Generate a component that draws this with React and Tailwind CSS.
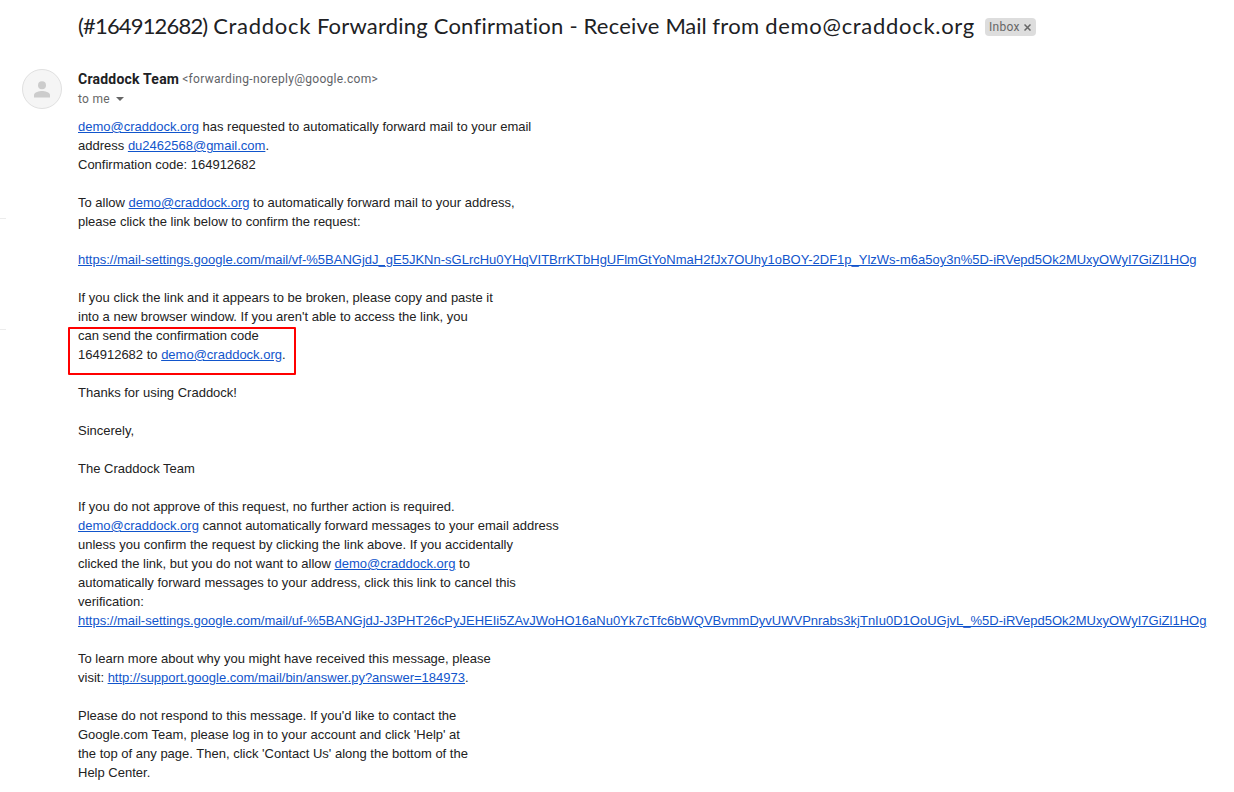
const Link = ({ children }) => (
  <a href="#" className="text-[#1155cc] underline">{children}</a>
);

const Demo = () => <Link>demo@craddock.org</Link>;

const Blank = () => <div className="h-[19px]" />;

const DIVIDERS = "absolute left-0 h-px w-1.5 bg-[#ececec]";

export default function App() {
  return (
    <div className="relative h-[792px] w-[1234px] overflow-hidden bg-white font-['Liberation_Sans',Arial,sans-serif] text-[#222222]">
      <div className={`${DIVIDERS} top-[218px]`} />
      <div className={`${DIVIDERS} top-[329px]`} />

      <header className="flex h-[54px] items-center pl-[78px]">
        <h1 className="w-[897px] shrink-0 whitespace-nowrap pb-0.5 font-['Lato',sans-serif] text-[22px] leading-7 tracking-[0.2px] text-[#202124]">
          <span className="tracking-[-0.83px]">(#164912682)</span>{" "}
          <span className="tracking-[0.7px]">Craddock</span>{" "}
          Forwarding{" "}
          <span className="tracking-[0.25px]">Confirmation</span>{" "}
          - Receive{" "}
          <span className="tracking-[-0.1px]">Mail</span>{" "}
          <span className="tracking-[0.3px]">from</span>{" "}
          <span className="tracking-[0.7px]">demo@craddock.org</span>
        </h1>
        <div className="ml-[10px] flex h-[18px] w-[51px] items-center rounded-[4px] bg-[#dddddd] pl-1 font-['Roboto',sans-serif] text-xs leading-[18px] tracking-[0.3px] text-[#666666]">
          <span>Inbox</span>
          <svg className="ml-[4.5px] h-[7px] w-[7px]" viewBox="0 0 7 7" fill="none" stroke="#666666" strokeWidth="1.5">
            <path d="M.5.5l6 6M6.5.5l-6 6" />
          </svg>
        </div>
      </header>

      <section className="flex h-[63px] pl-[22px] pt-[15px]">
        <div className="flex h-10 w-10 items-center justify-center rounded-full border border-[#e0e0e0] bg-[#f5f5f5]">
          <svg className="h-6 w-6" viewBox="0 0 24 24" fill="#cccccc">
            <circle cx="12" cy="8.300" r="4" />
            <path d="M4 20.500v-2.500c0-2.700 5.300-4 8-4s8 1.300 8 4v2.500z" />
          </svg>
        </div>
        <div className="ml-4 font-['Roboto',sans-serif]">
          <div className="flex h-5 items-center whitespace-nowrap">
            <span className="text-sm font-bold leading-5 tracking-[0.22px] text-[#202124]">Craddock Team</span>
            <span className="ml-[3px] text-xs leading-5 tracking-[0.3px] text-[#5f6368]">&lt;forwarding-noreply@google.com&gt;</span>
          </div>
          <div className="flex h-5 items-center text-xs tracking-[0.3px] text-[#666666]">
            <span>to me</span>
            <svg className="ml-1.5 h-1 w-2" viewBox="0 0 8 4" fill="#666666">
              <path d="M0 0h8L4 4z" />
            </svg>
          </div>
        </div>
      </section>

      <main className="whitespace-nowrap pl-[78px] text-[13px] leading-[19px]">
        <p><Demo /> has requested to automatically forward mail to your email</p>
        <p>address <Link>du2462568@gmail.com</Link>.</p>
        <p>Confirmation code: 164912682</p>
        <Blank />
        <p>To allow <Demo /> to automatically forward mail to your address,</p>
        <p>please click the link below to confirm the request:</p>
        <Blank />
        <p><Link>https://mail-settings.google.com/mail/vf-%5BANGjdJ_gE5JKNn-sGLrcHu0YHqVITBrrKTbHgUFlmGtYoNmaH2fJx7OUhy1oBOY-2DF1p_YlzWs-m6a5oy3n%5D-iRVepd5Ok2MUxyOWyI7GiZl1HOg</Link></p>
        <Blank />
        <p>If you click the link and it appears to be broken, please copy and paste it</p>
        <p>into a new browser window. If you aren't able to access the link, you</p>
        <div className="relative">
          <p>can send the confirmation code</p>
          <p>164912682 to <Demo />.</p>
          <div className="pointer-events-none absolute -left-2.5 top-[1px] h-12 w-[228px] rounded-[1px] border-2 border-[#ff0000]" />
        </div>
        <Blank />
        <p>Thanks for using Craddock!</p>
        <Blank />
        <p>Sincerely,</p>
        <Blank />
        <p>The Craddock Team</p>
        <Blank />
        <p>If you do not approve of this request, no further action is required.</p>
        <p><Demo /> cannot automatically forward messages to your email address</p>
        <p>unless you confirm the request by clicking the link above. If you accidentally</p>
        <p>clicked the link, but you do not want to allow <Demo /> to</p>
        <p>automatically forward messages to your address, click this link to cancel this</p>
        <p>verification:</p>
        <p><Link>https://mail-settings.google.com/mail/uf-%5BANGjdJ-J3PHT26cPyJEHEIi5ZAvJWoHO16aNu0Yk7cTfc6bWQVBvmmDyvUWVPnrabs3kjTnIu0D1OoUGjvL_%5D-iRVepd5Ok2MUxyOWyI7GiZl1HOg</Link></p>
        <Blank />
        <p>To learn more about why you might have received this message, please</p>
        <p>visit: <Link>http://support.google.com/mail/bin/answer.py?answer=184973</Link>.</p>
        <Blank />
        <p>Please do not respond to this message. If you'd like to contact the</p>
        <p>Google.com Team, please log in to your account and click 'Help' at</p>
        <p>the top of any page. Then, click 'Contact Us' along the bottom of the</p>
        <p>Help Center.</p>
      </main>
    </div>
  );
}
